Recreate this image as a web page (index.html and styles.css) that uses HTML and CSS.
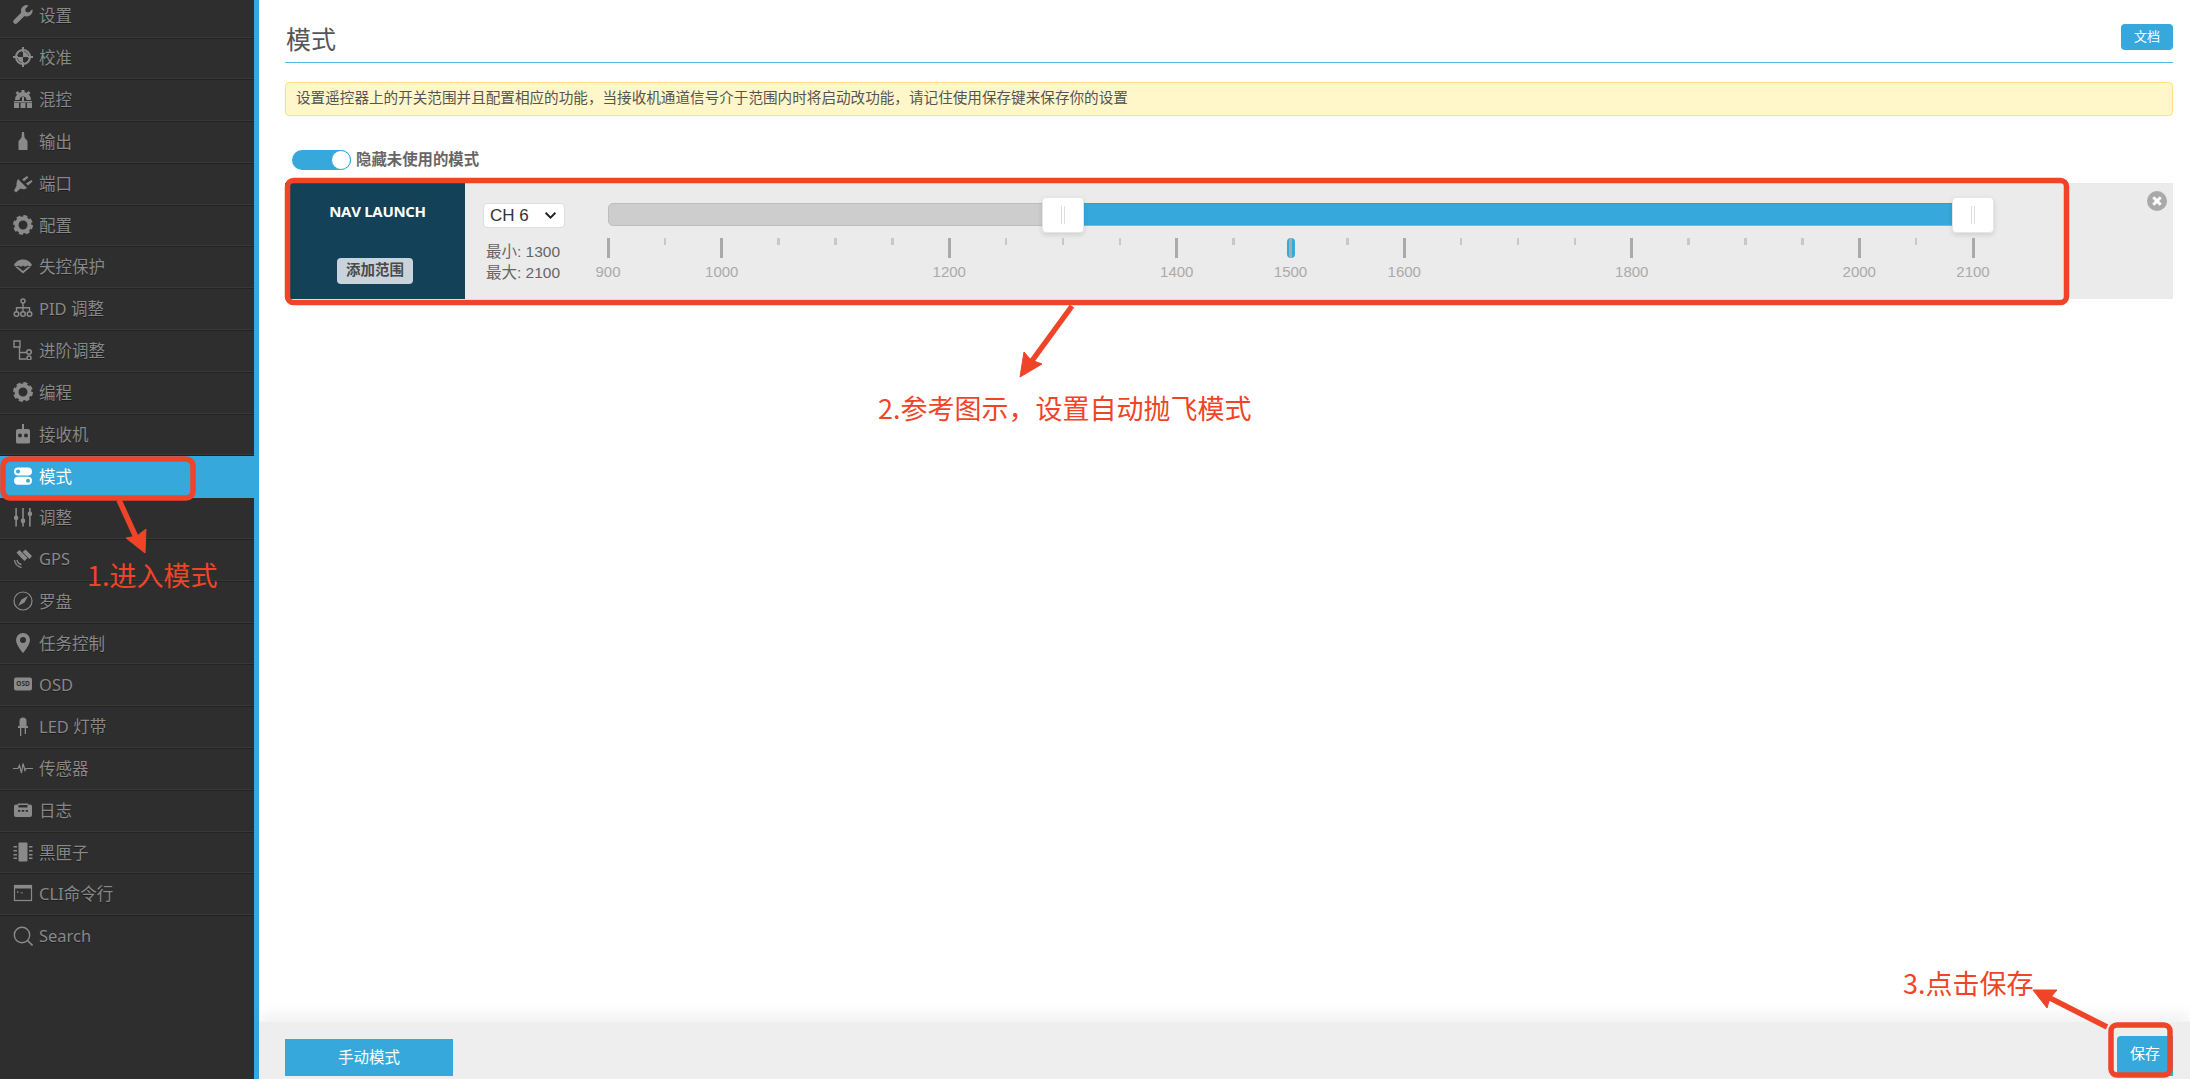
FILE: index.html
```html
<!DOCTYPE html>
<html lang="zh-CN">
<head>
    <meta charset="UTF-8">
    <title>模式</title>
    <link rel="stylesheet" href="styles.css">
</head>
<body>
<div class="app">
    <nav class="sidebar">
        <a class="nav-item"><svg viewBox="0 0 20 20"><path d="M19.3 4.2l-3.4 3.4-3-.7-.7-3L15.600.5a5.600 5.600 0 0 0-7.300 7.100L.9 15a2.300 2.300 0 0 0 3.200 3.300l7.400-7.400a5.600 5.600 0 0 0 7.800-6.700z"/></svg><span>设置</span></a>
        <a class="nav-item"><svg viewBox="0 0 20 20"><circle cx="10" cy="10" r="7" fill="none" stroke-width="2" class="line"/><path d="M10 4.500a5.500 5.500 0 0 1 5.500 5.500H10zM10 15.500A5.500 5.500 0 0 1 4.500 10H10z"/><path d="M9 0h2v5H9zM9 15h2v5H9zM0 9h5v2H0zM15 9h5v2h-5z"/></svg><span>校准</span></a>
        <a class="nav-item"><svg viewBox="0 0 20 20"><path d="M2 11a8 8 0 0 1 16 0h-4.500a3.500 3.500 0 0 0-7 0z"/><path d="M8.500 1h3v3h-3zM2.500 4l2-2 2 2-2 2zM13.500 4l2-2 2 2-2 2zM9 8h2v4H9zM1 12h18v1.500H1z"/><path d="M1 14h5v5H1zM7.500 14h5v5h-5zM14 14h5v5h-5z"/></svg><span>混控</span></a>
        <a class="nav-item"><svg viewBox="0 0 20 20"><path d="M9 1h2l.5 5.500 2 2.500 1 1v9H5.500v-9l1-1 2-2.500z"/></svg><span>输出</span></a>
        <a class="nav-item"><svg viewBox="0 0 20 20"><path d="M5 6l9 9c-2 1.500-4.500 1.500-6.500.5L3 19.500 1 17.500l2.500-4.500C3.500 11 3.500 8 5 6z"/><path d="M9 6.500l5-3.500 1.300 1.500-4.300 3.800zM13 10.500l5.500-3.500 1 1.500-4.500 4z"/></svg><span>端口</span></a>
        <a class="nav-item"><svg viewBox="0 0 20 20"><circle cx="10" cy="10" r="6.500" fill="none" stroke-width="4" class="line"/><circle cx="10" cy="10" r="8.500" fill="none" stroke-width="3" stroke-dasharray="4 2.680" class="line"/></svg><span>配置</span></a>
        <a class="nav-item"><svg viewBox="0 0 20 20"><path d="M1 9c2-4 5.500-5.500 9-5.500S17 5 19 9c-1.500 2-3 2-4.500.5-1.500 1.500-3 1.500-4.500 0-1.500 1.500-3 1.500-4.500 0C4 11 2.500 11 1 9z"/><path d="M2.500 11L10 17.500 17.500 11l-2.500 0L10 15 5 11z"/></svg><span>失控保护</span></a>
        <a class="nav-item"><svg viewBox="0 0 20 20"><circle cx="10" cy="3" r="2" fill="none" stroke-width="1.500" class="line"/><path d="M9.300 5h1.400v4h6.500v4h-1.400v-2.600h-5.100V13H9.300v-2.600H4.200V13H2.800V9h6.500z"/><circle cx="3.500" cy="16" r="2.300" fill="none" stroke-width="1.500" class="line"/><circle cx="10" cy="16" r="2.300" fill="none" stroke-width="1.500" class="line"/><circle cx="16.500" cy="16" r="2.300" fill="none" stroke-width="1.500" class="line"/></svg><span>PID 调整</span></a>
        <a class="nav-item"><svg viewBox="0 0 20 20"><path d="M1 1h6v6H1z" fill="none" stroke-width="1.400" class="line"/><path d="M6.500 7v5.500h7M6.500 12v7h7" fill="none" stroke-width="1.400" class="line"/><circle cx="16" cy="12" r="2.300" fill="none" stroke-width="1.500" class="line"/><circle cx="16" cy="18" r="2" fill="none" stroke-width="1.500" class="line"/></svg><span>进阶调整</span></a>
        <a class="nav-item"><svg viewBox="0 0 20 20"><circle cx="10" cy="10" r="6.500" fill="none" stroke-width="4" class="line"/><circle cx="10" cy="10" r="8.500" fill="none" stroke-width="3" stroke-dasharray="4 2.680" class="line"/></svg><span>编程</span></a>
        <a class="nav-item"><svg viewBox="0 0 20 20"><path d="M9 0h2v6H9z"/><path d="M3 7a2 2 0 0 1 2-2h10a2 2 0 0 1 2 2v11a1.500 1.500 0 0 1-1.500 1.500h-11A1.500 1.500 0 0 1 3 18zM7 9.500a2 2 0 1 0 0 4 2 2 0 0 0 0-4zm6 0a2 2 0 1 0 0 4 2 2 0 0 0 0-4z" fill-rule="evenodd"/></svg><span>接收机</span></a>
        <a class="nav-item active"><svg viewBox="0 0 20 20"><path d="M5 1.500h10a4 4 0 0 1 0 8H5a4 4 0 0 1 0-8zM5 3.500a2 2 0 1 0 0 4 2 2 0 0 0 0-4z" fill-rule="evenodd"/><path d="M5 10.800h10a4 4 0 0 1 0 8H5a4 4 0 0 1 0-8zM15 12.800a2 2 0 1 0 0 4 2 2 0 0 0 0-4z" fill-rule="evenodd"/></svg><span>模式</span></a>
        <a class="nav-item"><svg viewBox="0 0 20 20"><path d="M2.300 1h1.600v8H2.300zM2.300 13h1.600v6.500H2.300zM9.200 1h1.600v11H9.200zM9.200 16h1.600v3.500H9.200zM16.100 1h1.600v4h-1.600zM16.100 9h1.600v10.500h-1.600z"/><rect x="1" y="8.500" width="4.200" height="4.500" rx="1.500"/><rect x="7.900" y="11.500" width="4.200" height="4.500" rx="1.500"/><rect x="14.800" y="4.500" width="4.200" height="4.500" rx="1.500"/></svg><span>调整</span></a>
        <a class="nav-item"><svg viewBox="0 0 20 20"><path d="M9.500 3l3-2.500 6.500 6.500-2.500 3zM3.500 3.500l3-2.500 3 3-3 3z"/><path d="M6.500 7l3-3 5 5-3 3z"/><path d="M1.500 11c.5 4 3 6.500 7 7.500M4 11c.5 2.500 2 4 4.500 4.500" fill="none" stroke-width="1.300" class="line"/></svg><span>GPS</span></a>
        <a class="nav-item"><svg viewBox="0 0 20 20"><circle cx="10" cy="10" r="9" fill="none" stroke-width="1.200" class="line"/><path d="M15 5l-3.500 6.500L8.500 8.500zM5 15l3.500-6.500 3 3z"/></svg><span>罗盘</span></a>
        <a class="nav-item"><svg viewBox="0 0 20 20"><path d="M10 0a7 7 0 0 0-7 7c0 5 7 13 7 13s7-8 7-13a7 7 0 0 0-7-7zm0 4a3 3 0 1 1 0 6 3 3 0 0 1 0-6z" fill-rule="evenodd"/></svg><span>任务控制</span></a>
        <a class="nav-item"><svg viewBox="0 0 20 20"><rect x="1" y="3.500" width="18" height="13" rx="2"/><text x="10" y="12.400" class="osd-text">OSD</text></svg><span>OSD</span></a>
        <a class="nav-item"><svg viewBox="0 0 20 20"><path d="M6.500 5a3.500 3.500 0 0 1 7 0v5h1.500v2H5v-2h1.500z"/><path d="M7 12h1.300v8H7zM11.700 12H13v6h-1.300z"/></svg><span>LED 灯带</span></a>
        <a class="nav-item"><svg viewBox="0 0 20 20"><path d="M0 10.500h5l1.500-3 2 7.500 1.500-9.500 2 7 1-2h7" fill="none" stroke-width="1.200" class="line"/></svg><span>传感器</span></a>
        <a class="nav-item"><svg viewBox="0 0 20 20"><path d="M1 6.500a2 2 0 0 1 2-2h2v-1h10v1h2a2 2 0 0 1 2 2V15a2 2 0 0 1-2 2H3a2 2 0 0 1-2-2zM5.500 5v2.500h9V5zM5 10v1.800h2.400V10zm3.800 0v1.800h2.400V10zm3.800 0v1.800H15V10z" fill-rule="evenodd"/></svg><span>日志</span></a>
        <a class="nav-item"><svg viewBox="0 0 20 20"><rect x="5.500" y="0.500" width="9" height="19" rx="1"/><path d="M0.500 4h3.500v1.400H0.500zM0.500 8h3.500v1.400H0.500zM0.500 12h3.500v1.400H0.500zM0.500 15.500h3.500v1.400H0.500zM16 4h3.500v1.400H16zM16 8h3.500v1.400H16zM16 12h3.500v1.400H16zM16 15.500h3.500v1.400H16z"/></svg><span>黑匣子</span></a>
        <a class="nav-item"><svg viewBox="0 0 20 20"><rect x="1.500" y="2.500" width="17" height="15" fill="none" stroke-width="1.200" class="line"/><path d="M1.500 2.500h17v3h-17zM4 8l2 1-2 1zM7.500 9.500h2.500v.8H7.500z"/></svg><span>CLI命令行</span></a>
        <a class="nav-item"><svg viewBox="0 0 20 20"><circle cx="9" cy="9" r="7.700" fill="none" stroke-width="1.400" class="line"/><path d="M14.500 14.500L19.500 19.500" fill="none" stroke-width="1.600" class="line"/></svg><span>Search</span></a>
    </nav>

    <main class="main">
        <div class="content">
            <div class="page-head">
                <h1>模式</h1>
                <a class="doc-btn">文档</a>
            </div>
            <div class="note">设置遥控器上的开关范围并且配置相应的功能，当接收机通道信号介于范围内时将启动改功能，请记住使用保存键来保存你的设置</div>
            <div class="hide-row">
                <span class="switch"><i></i></span>
                <label>隐藏未使用的模式</label>
            </div>
            <div class="mode-row">
                <div class="mode-name">
                    <strong>NAV LAUNCH</strong>
                    <a class="add-range">添加范围</a>
                </div>
                <div class="channel">
                    <div class="fake-select">CH 6<svg viewBox="0 0 12 8"><path d="M1.500 1.500L6 6l4.500-4.500"/></svg></div>
                    <div class="range-text">最小: 1300<br>最大: 2100</div>
                </div>
                <div class="slider">
                    <div class="bar">
                        <div class="bar-off"></div>
                        <div class="bar-on"></div>
                        <div class="handle handle-min"></div>
                        <div class="handle handle-max"></div>
                    </div>
                    <div class="pips">
                        <div class="pip major"><i></i><span>900</span></div>
                        <div class="pip"><i></i></div>
                        <div class="pip major"><i></i><span>1000</span></div>
                        <div class="pip"><i></i></div>
                        <div class="pip"><i></i></div>
                        <div class="pip"><i></i></div>
                        <div class="pip major"><i></i><span>1200</span></div>
                        <div class="pip"><i></i></div>
                        <div class="pip"><i></i></div>
                        <div class="pip"><i></i></div>
                        <div class="pip major"><i></i><span>1400</span></div>
                        <div class="pip"><i></i></div>
                        <div class="pip major now"><i></i><span>1500</span></div>
                        <div class="pip"><i></i></div>
                        <div class="pip major"><i></i><span>1600</span></div>
                        <div class="pip"><i></i></div>
                        <div class="pip"><i></i></div>
                        <div class="pip"><i></i></div>
                        <div class="pip major"><i></i><span>1800</span></div>
                        <div class="pip"><i></i></div>
                        <div class="pip"><i></i></div>
                        <div class="pip"><i></i></div>
                        <div class="pip major"><i></i><span>2000</span></div>
                        <div class="pip"><i></i></div>
                        <div class="pip major"><i></i><span>2100</span></div>
                    </div>
                </div>
                <svg class="remove" viewBox="0 0 20 20"><circle cx="10" cy="10" r="10"/><path d="M6.300 6.300l7.400 7.400M13.700 6.300l-7.400 7.400"/></svg>
            </div>
        </div>
        <div class="toolbar">
            <a class="btn-manual">手动模式</a>
            <a class="btn-save">保存</a>
        </div>
    </main>
</div>

<!-- annotations drawn on top of the screenshot -->
<svg class="marks" viewBox="0 0 2190 1079">
    <rect x="3" y="459" width="190" height="39" rx="7"/>
    <path d="M119 500L140 546"/>
    <path class="head" d="M145 553L126 538 137 536 146 529z"/>
    <rect x="287.500" y="180.500" width="1779" height="122" rx="6"/>
    <path d="M1072 306L1026 369"/>
    <path class="head" d="M1020 377L1024 352 1031 360 1042 364z"/>
    <path d="M2107 1027L2042 994"/>
    <path class="head" d="M2033 990L2057 990 2050 998 2047 1008z"/>
    <rect x="2111" y="1025" width="59" height="50" rx="6"/>
</svg>
<div class="callout callout-1">1.进入模式</div>
<div class="callout callout-2">2.参考图示，设置自动抛飞模式</div>
<div class="callout callout-3">3.点击保存</div>
</body>
</html>
```

FILE: styles.css
```css
* { box-sizing: border-box; }
html, body { margin: 0; height: 100%; overflow: hidden; }
body {
    font-family: "Liberation Sans", "Noto Sans CJK SC", sans-serif;
    color: #555;
    background: #fff;
}
a { cursor: pointer; }

.app { display: flex; height: 1079px; }

/* left menu */
.sidebar {
    width: 259px;
    flex: none;
    height: 100%;
    overflow: hidden;
    background: #2e2e2e;
    border-right: 5px solid #37a8db;
}
.nav-item {
    display: flex;
    align-items: center;
    height: 41.8px;
    padding: 0 0 3px 13px;
    gap: 6px;
    font-family: "Noto Sans", "Noto Sans CJK SC", sans-serif;
    font-size: 16.500px;
    color: #888;
    text-shadow: 0 1px 0 #1c1c1c;
    border-bottom: 1px solid #232323;
    box-shadow: inset 0 -1px 0 #383838;
}
.nav-item:first-child { height: 38.5px; }
.nav-item:first-child svg, .nav-item:first-child span { position: relative; top: -2px; }
.nav-item:last-child { border-bottom: 0; box-shadow: none; }
.nav-item svg { width: 20px; height: 20px; flex: none; fill: #8a8a8a; }
.nav-item svg .line { stroke: #8a8a8a; }
.osd-text { font: bold 6.500px "Noto Sans", sans-serif; fill: #2e2e2e; text-anchor: middle; text-shadow: none; }
.nav-item.active { background: #37a8db; color: #fff; text-shadow: none; border-bottom: 0; box-shadow: none; }
.nav-item.active svg { fill: #fff; }

/* main area */
.main { flex: 1; display: flex; flex-direction: column; min-width: 0; }
.content { flex: 1; padding: 0 17px 0 26px; }

.page-head {
    height: 63px;
    display: flex;
    justify-content: space-between;
    border-bottom: 1px solid #59bbe8;
}
.page-head h1 {
    margin: 0;
    padding: 20px 0 0 1px;
    font-size: 25px;
    line-height: 36px;
    font-weight: 400;
    color: #555;
    font-family: "Noto Sans CJK SC", sans-serif;
}
.doc-btn {
    margin-top: 24px;
    width: 52px;
    height: 26px;
    line-height: 26px;
    text-align: center;
    font-size: 13px;
    color: #fff;
    background: #37a8db;
    border-radius: 4px;
}
.note {
    margin-top: 19px;
    height: 34px;
    line-height: 31px;
    padding-left: 10px;
    font-size: 14.600px;
    color: #555;
    background: #fff6c9;
    border: 1px solid #ffe27c;
    border-radius: 4px;
}
.hide-row {
    margin-top: 34px;
    height: 33px;
    padding-left: 7px;
    display: flex;
    align-items: flex-start;
    gap: 5px;
}
.switch {
    width: 59px;
    height: 20px;
    display: block;
    position: relative;
    border-radius: 10px;
    background: #37a8db;
}
.switch i {
    position: absolute;
    right: 0;
    top: 0;
    width: 20px;
    height: 20px;
    border-radius: 50%;
    background: #fff;
    border: 1px solid #37a8db;
}
.hide-row label {
    font-size: 15.400px;
    line-height: 20px;
    font-weight: bold;
    color: #666;
}

.mode-row {
    position: relative;
    display: flex;
    height: 116px;
    background: #ebebeb;
}
.mode-name {
    width: 180px;
    margin-right: 18px;
    background: #134157;
    display: flex;
    flex-direction: column;
    align-items: center;
    padding: 17px 0 0 0;
}
.mode-name strong {
    font-family: "Open Sans", sans-serif;
    font-size: 15px;
    line-height: 22px;
    color: #fff;
    letter-spacing: -0.300px;
    margin-left: 5px;
}
.add-range {
    margin: 36px 0 0 0;
    width: 76px;
    height: 26px;
    line-height: 25px;
    text-align: center;
    font-size: 14.500px;
    font-weight: bold;
    color: #4a4a4a;
    background: #c9d3dc;
    border-radius: 4px;
}
.channel { width: 125px; padding-top: 20px; }
.fake-select {
    width: 82px;
    height: 25px;
    padding: 0 7px 0 6px;
    display: flex;
    align-items: center;
    justify-content: space-between;
    font-size: 17px;
    color: #333;
    background: #fff;
    border: 1px solid #ddd;
    border-radius: 4px;
}
.fake-select svg { width: 13px; height: 9px; fill: none; stroke: #222; stroke-width: 1.800; }
.range-text {
    margin: 13px 0 0 3px;
    font-size: 15.500px;
    line-height: 21px;
    color: #666;
}

.slider { width: 1365px; padding-top: 20px; }
.bar { position: relative; display: flex; height: 23px; }
.bar-off {
    width: 455px;
    background: #cdcdcd;
    border: 1px solid #bdbdbd;
    border-radius: 5px 0 0 5px;
}
.bar-on {
    flex: 1;
    background: #37a8db;
    border-top: 1px solid #3a9bc8;
    border-bottom: 1px solid #7fb5cf;
}
.handle {
    position: absolute;
    top: -6px;
    width: 42px;
    height: 36px;
    background: #fff;
    border: 1px solid #e6e6e6;
    border-radius: 4px;
    box-shadow: 0 2px 5px rgba(0, 0, 0, 0.12);
}
.handle::before, .handle::after {
    content: "";
    position: absolute;
    top: 8px;
    width: 1px;
    height: 18px;
    background: #ddd;
}
.handle::before { left: 18px; }
.handle::after { left: 21px; }
.handle-min { left: 434px; }
.handle-max { right: -21px; }

.pips { display: flex; justify-content: space-between; margin-top: 12px; }
.pip { width: 0; display: flex; flex-direction: column; align-items: center; position: relative; }
.pip i { display: block; flex: none; width: 2.500px; height: 7px; background: #c8c8c8; }
.pip span { font-size: 15px; line-height: 16px; margin-top: 6px; color: #aaa; }
.pip.major i { width: 3px; height: 20px; background: #aaa; }
.pip.now::before {
    content: "";
    position: absolute;
    top: 0;
    left: -4px;
    width: 8px;
    height: 20px;
    border-radius: 4px;
    background: #37a8db;
}
.pip.now i { position: relative; }

.remove { position: absolute; right: 6px; top: 8px; width: 20px; height: 20px; fill: #a9a9a9; stroke: #fff; stroke-width: 3; }
.remove circle { stroke: none; }

/* bottom toolbar */
.toolbar {
    height: 58px;
    flex: none;
    padding: 17px 17px 0 26px;
    display: flex;
    justify-content: space-between;
    align-items: flex-start;
    background: #eee;
    border-top: 1px solid #f4f4f4;
    box-shadow: 0 -8px 12px rgba(0, 0, 0, 0.05);
}
.toolbar a {
    display: block;
    height: 37px;
    line-height: 37px;
    text-align: center;
    font-size: 15.500px;
    color: #fff;
    background: #37a8db;
}
.toolbar .btn-manual { width: 168px; }
.toolbar .btn-save { width: 56px; margin-top: -3px; height: 40px; line-height: 36px; font-size: 15px; border-radius: 4px 0 0 0; }

/* annotations */
.marks { position: absolute; left: 0; top: 0; width: 2190px; height: 1079px; fill: none; stroke: #ef4427; stroke-width: 5.500; pointer-events: none; }
.marks .head { fill: #ef4427; stroke-width: 1; }
.callout {
    position: absolute;
    font-family: "Noto Sans CJK SC", sans-serif;
    font-size: 27px;
    line-height: 36px;
    color: #ef4427;
    white-space: nowrap;
}
.callout-1 { left: 87px; top: 557px; }
.callout-2 { left: 878px; top: 390px; }
.callout-3 { left: 1903px; top: 965px; }
```
